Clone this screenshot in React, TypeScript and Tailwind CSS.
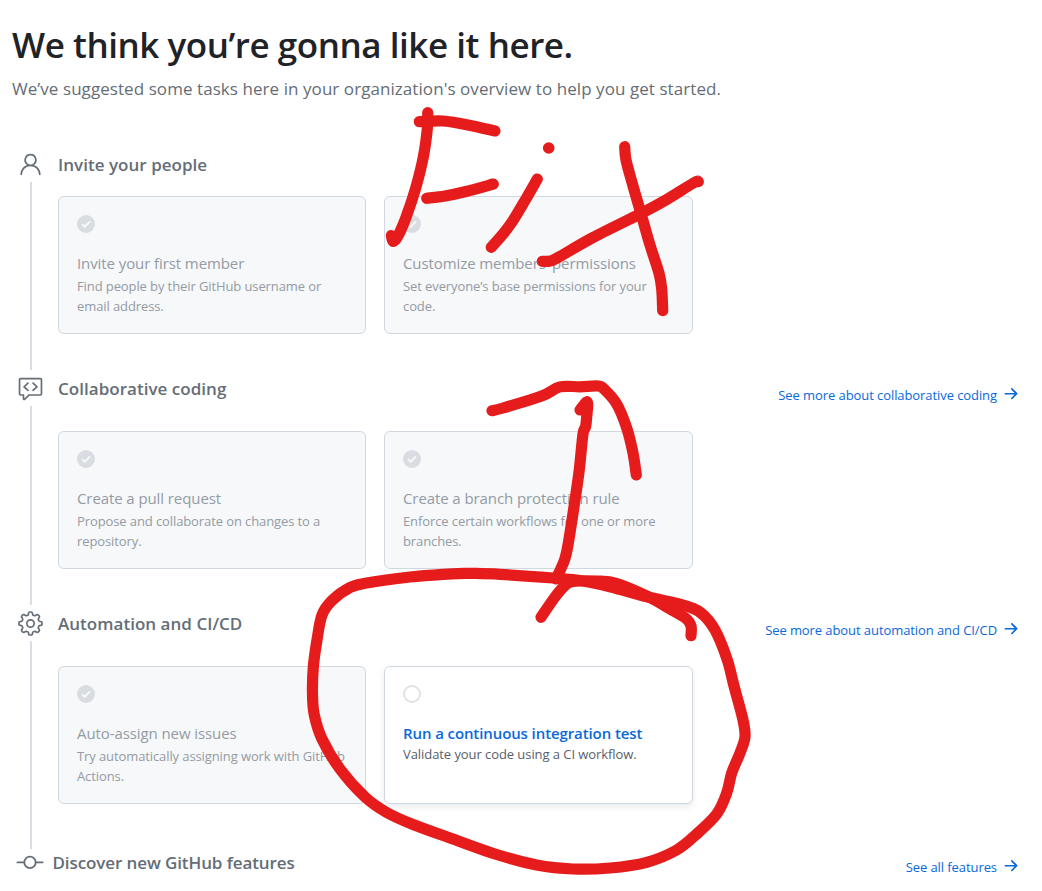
import React from "react";
import { GoPerson, GoCodeReview, GoGear } from "react-icons/go";

type Point = [number, number];

function smooth(points: Point[]): string {
  let d = `M${points[0][0]} ${points[0][1]}`;
  for (let i = 0; i < points.length - 1; i++) {
    const p0 = points[Math.max(0, i - 1)];
    const p1 = points[i];
    const p2 = points[i + 1];
    const p3 = points[Math.min(points.length - 1, i + 2)];
    const k = 6;
    d += ` C${p1[0] + (p2[0] - p0[0]) / k} ${p1[1] + (p2[1] - p0[1]) / k} ${p2[0] - (p3[0] - p1[0]) / k} ${p2[1] - (p3[1] - p1[1]) / k} ${p2[0]} ${p2[1]}`;
  }
  return d;
}

const strokes: Point[][] = [
  [[427.7, 112.7], [427.5, 126.7], [423.5, 156], [416, 187], [406.5, 216], [398.5, 235], [393.5, 241.5], [391.3, 235.5]],
  [[419.3, 121.7], [443, 121], [468, 125], [495, 131]],
  [[426.7, 198.3], [445, 196], [466, 191.5], [493.3, 184]],
  [[537.3, 179], [525, 200.5], [513, 220.5], [503, 234], [491.3, 247.3]],
  [[624.7, 146.7], [626, 160], [633, 186], [641.7, 216], [650, 245], [659, 273.3], [661.7, 289], [662.7, 310.7]],
  [[698.3, 181.7], [693.5, 183], [663, 201.7], [640, 214], [593, 237.5], [558, 257.5], [550, 261], [542.3, 261.3]],
  [[492, 410.7], [503, 408], [541.7, 396], [560, 386.9], [580, 386.8], [598, 386], [604, 389], [616.7, 404], [626.7, 428], [633, 453], [636.3, 475]],
  [[580, 410], [587.3, 402], [586.7, 417], [585.5, 427], [583, 434], [579, 472], [573.5, 510], [568.5, 542], [564.5, 560], [556, 579]],
  [[541, 617.3], [555, 597], [565, 585.5], [573, 581.5], [597, 581], [617, 583.5], [648, 596.5], [670, 609], [686, 618.5], [691, 626], [691, 635.7]],
  [
    [470, 573.3], [500, 574.3], [553, 578], [583, 581], [610, 586.7], [648, 597], [683, 605], [701, 613], [715, 630],
    [727, 659], [734, 686], [743, 720], [745, 737], [740, 753], [731.7, 773], [726.7, 793], [716.7, 814], [696.7, 834],
    [676.7, 850], [646.7, 862.3], [610, 868], [573, 869], [536.7, 865], [496.7, 854.5], [453, 839], [413, 824.5],
    [386.7, 812.5], [365, 797], [340, 769], [322, 739], [314.3, 715], [312.5, 695], [313.3, 667], [317, 640],
    [322, 615], [332, 600.5], [350, 587.5], [366.7, 583], [410, 577], [443, 574.3], [470, 573.3],
  ],
];

function Scribbles() {
  return (
    <svg className="pointer-events-none absolute left-0 top-0" width="1042" height="891" viewBox="0 0 1042 891" fill="none" stroke="#e61c1c" strokeWidth="11.2" strokeLinecap="round" strokeLinejoin="round">
      {strokes.map((s, i) => (
        <path key={i} d={smooth(s)} />
      ))}
      <circle cx="548.7" cy="148" r="5.8" fill="#e61c1c" stroke="none" />
    </svg>
  );
}

function Check() {
  return (
    <svg width="18" height="18" viewBox="0 0 18 18" className="block">
      <circle cx="9" cy="9" r="9" fill="#d9dce1" />
      <path d="M5 9.1l2.7 2.7 5.3-5.4" fill="none" stroke="#f6f8fa" strokeWidth="2" />
    </svg>
  );
}

function Commit() {
  return (
    <svg width="28" height="28" viewBox="0 0 28 28" fill="none" stroke="#656d76" strokeWidth="1.8" strokeLinecap="round" className="block">
      <circle cx="14" cy="13.4" r="5.7" />
      <path d="M1.4 13.4h6.9M19.7 13.4h6.9" />
    </svg>
  );
}

function Arrow() {
  return (
    <svg width="18" height="18" viewBox="0 0 16 16" fill="currentColor" className="-mt-0.5 ml-[5px] block">
      <path d="M8.22 2.97a.75.75 0 0 1 1.06 0l4.25 4.25a.75.75 0 0 1 0 1.06l-4.25 4.25a.751.751 0 0 1-1.042-.018.751.751 0 0 1-.018-1.042l2.97-2.97H3.05a.75.75 0 0 1 0-1.5h8.14L8.22 4.03a.75.75 0 0 1 0-1.06Z" />
    </svg>
  );
}

function Card({ title, lines, open }: { title: string; lines: string[]; open?: boolean }) {
  return (
    <div
      className={
        open
          ? "h-[138px] rounded-md border border-[#d0d7de] bg-white px-[18px] pt-[18px] shadow-[0_3px_6px_rgba(140,149,159,0.18)]"
          : "h-[138px] rounded-md border border-[#d0d7de] bg-[#f6f8fa] px-[18px] pt-[18px]"
      }
    >
      {open ? <div className="size-[18px] rounded-full border-2 border-[#e1e2e4]" /> : <Check />}
      <h3
        className={
          open
            ? "mb-px mt-[18px] whitespace-nowrap text-[15px] font-semibold leading-6 tracking-[-0.1px] text-[#0969da]"
            : "mb-px mt-[18px] whitespace-nowrap text-[15px] leading-6 tracking-[-0.09px] text-[#949ba3]"
        }
      >
        {title}
      </h3>
      <p className={open ? "-mt-0.5 whitespace-nowrap text-[13px] leading-5 tracking-[-0.07px] text-[#57606a]" : "whitespace-nowrap text-[13px] leading-5 tracking-[-0.1px] text-[#949ba3]"}>
        {lines.map((l) => (
          <span key={l} className="block">{l}</span>
        ))}
      </p>
    </div>
  );
}

function More({ className, children }: { className: string; children: React.ReactNode }) {
  return (
    <a className={className}>
      {children}
      <Arrow />
    </a>
  );
}

interface SectionProps {
  icon: React.ReactNode;
  title: string;
  more?: string;
  className: string;
  cardsClass: string;
  children: React.ReactNode;
}

function Section({ icon, title, more, className, cardsClass, children }: SectionProps) {
  return (
    <section className={className}>
      <div className="flex w-7 flex-col text-[#656d76]">
        {icon}
        <div className="ml-[13px] mt-1 w-0.5 flex-1 bg-[#d8dee4]" />
      </div>
      <div className="ml-[13px] flex-1">
        <div className="flex h-7 justify-between">
          <h2 className="text-[17px] font-semibold leading-7 tracking-[0.03px] text-[#656d76]">{title}</h2>
          {more && (
            <More className="mt-[10px] flex h-5 items-center whitespace-nowrap text-[13px] leading-5 tracking-[-0.08px] text-[#0969da]">{more}</More>
          )}
        </div>
        <div className={cardsClass}>{children}</div>
      </div>
    </section>
  );
}

export default function App() {
  return (
    <main className="relative h-[891px] w-[1042px] overflow-hidden bg-white font-['Open_Sans','Noto_Sans',sans-serif]">
      <header className="h-[151px] pl-3 pt-[21px]">
        <h1 className="whitespace-nowrap text-[35px] font-semibold leading-[48px] tracking-[-0.45px] text-[#1f2328]">We think you’re gonna like it here.</h1>
        <p className="mt-[6px] whitespace-nowrap text-[17px] leading-7 tracking-[0.065px] text-[#656d76]">
          We’ve suggested some tasks here in your organization's overview to help you get started.
        </p>
      </header>
      <Section
        className="flex h-[219px] pl-[17px] pr-[22px]"
        cardsClass="mt-[17px] grid grid-cols-[308px_309px] gap-[18px]"
        icon={<GoPerson className="size-[27px]" />}
        title="Invite your people"
      >
        <Card title="Invite your first member" lines={["Find people by their GitHub username or", "email address."]} />
        <Card title="Customize members’ permissions" lines={["Set everyone’s base permissions for your", "code."]} />
      </Section>
      <Section
        className="flex h-[235px] pl-[17px] pr-[22px] pt-[5px]"
        cardsClass="mt-[28px] grid grid-cols-[308px_309px] gap-[18px]"
        icon={<GoCodeReview className="size-[27px]" />}
        title="Collaborative coding"
        more="See more about collaborative coding"
      >
        <Card title="Create a pull request" lines={["Propose and collaborate on changes to a", "repository."]} />
        <Card title="Create a branch protection rule" lines={["Enforce certain workflows for one or more", "branches."]} />
      </Section>
      <Section
        className="flex h-[244px] pl-[17px] pr-[22px] pt-[5px]"
        cardsClass="mt-[28px] grid grid-cols-[308px_309px] gap-[18px]"
        icon={<GoGear className="size-[27px]" />}
        title="Automation and CI/CD"
        more="See more about automation and CI/CD"
      >
        <Card title="Auto-assign new issues" lines={["Try automatically assigning work with GitHub", "Actions."]} />
        <Card open title="Run a continuous integration test" lines={["Validate your code using a CI workflow."]} />
      </Section>
      <footer className="flex h-7 pl-[15.5px] pr-[22px]">
        <Commit />
        <h2 className="ml-[9px] flex-1 text-[17px] font-semibold leading-7 tracking-[-0.1px] text-[#656d76]">Discover new GitHub features</h2>
        <More className="mt-[8px] flex h-5 items-center whitespace-nowrap text-[13px] leading-5 tracking-[-0.08px] text-[#0969da]">See all features</More>
      </footer>
      <Scribbles />
    </main>
  );
}
